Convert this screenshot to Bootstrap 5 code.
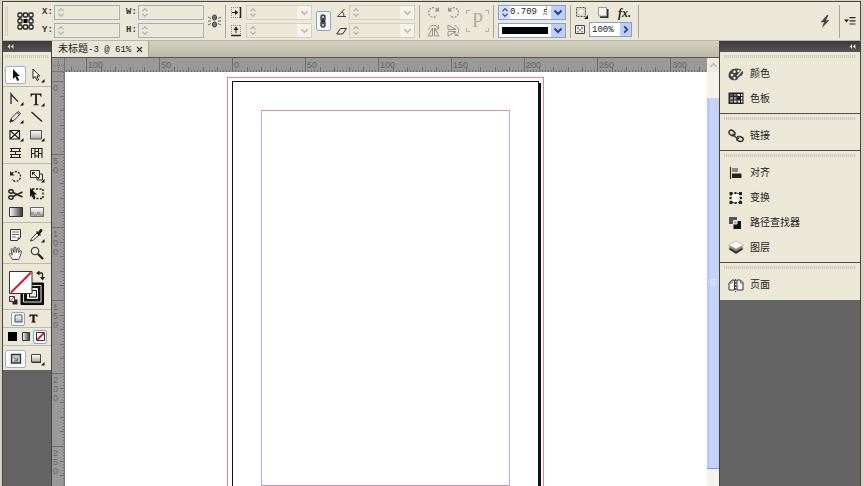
<!DOCTYPE html>
<html lang="zh-CN">
<head>
<meta charset="utf-8">
<meta name="viewport" content="width=device-width, initial-scale=1">
<title>未标题-3 @ 61%</title>
<link rel="stylesheet" href="https://cdn.jsdelivr.net/npm/bootstrap@5.3.0/dist/css/bootstrap.min.css">
<style>
:root{--face:#ebe8d8;--edge:#45443f;--line:#a9a698;--blue:#9fb0c4;--pasteboard:#646464}
body{background:#d6d3c4;font:10px/14px "Liberation Sans","Noto Sans CJK SC",sans-serif;color:#222;overflow:hidden}
.app{padding:1px 3px 0 2px}
button,input,select{font:inherit;color:inherit;padding:0;margin:0;border:0;background:none;border-radius:0;min-width:0}
svg{display:block;flex:none}
.latin{font:9px/14px "Liberation Mono","Noto Sans CJK SC",monospace}
/* control bar */
.control-bar{height:40px;background:var(--face);border:1px solid var(--edge);border-width:1px 1px 0;padding-left:2px;border-bottom:1px solid #bab7a8}
.grip-v{width:3px;height:30px;border:1px solid #d0cdbd;border-width:0 1px}
.pair{display:grid;grid-template-rows:15px 15px;row-gap:3px;align-items:center}
.pair-label{grid-template-columns:12px 66px}
.pair-next{padding-left:6px}
.tag{font:bold 9px/14px "Liberation Mono",monospace;color:#33322d}
.field{height:15px;border:1px solid var(--blue);display:flex;align-items:center}
.field input{flex:1;width:10px;height:13px}
.field .spin{width:11px;height:13px;display:grid;place-items:center;color:#b9b8b0}
.field .drop{width:14px;height:13px;display:grid;place-items:center;color:#c0beb2;background:#f4f2e9}
.w66{width:66px}.w68{width:68px}
.dim{border-color:#d2cfc0}
.live{background:#fff;border-color:#86a0d2}
.live .spin{color:#3e5b94;background:#d6e1fb}
.live .drop{color:#28457f;background:#bccffa}
.pct{width:43px;padding-left:2px}
.pct .drop{width:11px}
.stroke-kind{flex:1;height:13px;appearance:none;background:linear-gradient(#000,#000) 3px 3px/46px 7px no-repeat}
.rule-v{width:1px;height:33px;background:var(--line)}
.slot{display:grid;justify-items:center}
.slot20{width:20px}.slot21{width:21px}.slot22{width:22px}.slot15{width:15px}.slot34{width:34px}
.link-btn{width:15px;height:20px;border:1px solid #8ea6c6;border-radius:2px;background:#f2f6fb;display:grid;place-items:center}
.spins{display:grid;grid-template-columns:13px 13px;grid-template-rows:13px 13px;gap:5px 7px;padding:0 6px 0 7px;color:#96948a}
.pbox{width:23px;height:22px;color:#b0ada0;font:20px/20px "Liberation Serif",serif;background:
 linear-gradient(#b5b2a5,#b5b2a5) 0 0/4px 1px,linear-gradient(#b5b2a5,#b5b2a5) 0 0/1px 4px,
 linear-gradient(#b5b2a5,#b5b2a5) 100% 0/4px 1px,linear-gradient(#b5b2a5,#b5b2a5) 100% 0/1px 4px,
 linear-gradient(#b5b2a5,#b5b2a5) 0 100%/4px 1px,linear-gradient(#b5b2a5,#b5b2a5) 0 100%/1px 4px,
 linear-gradient(#b5b2a5,#b5b2a5) 100% 100%/4px 1px,linear-gradient(#b5b2a5,#b5b2a5) 100% 100%/1px 4px;background-repeat:no-repeat}
.effects{width:67px;padding-left:4px;row-gap:2px}
.fx{font:italic bold 12px/14px "Liberation Serif",serif}
.gap9{gap:9px}
/* docks */
.dock-head{height:11px;background:linear-gradient(#3a3a3a,#555);color:#ddd}
.toolbox{width:50px;background:var(--pasteboard);border:1px solid var(--edge);border-width:0 1px}
.tool-body{background:var(--face)}
.tool-grip{height:14px;padding:3px 2px}
.tool-grip div,.panel-grip{height:3px;background:repeating-linear-gradient(90deg,#cfccbd 0 1px,#e4e1d2 1px 2px)}
.tool-set{display:grid;grid-template-columns:21px 21px;padding:3px 2px 1px;border-bottom:1px solid #bcb9aa}
.tool-set.first{padding:0 2px 2px}
.tool-set.last{border:0;padding:4px 2px 2px}
.tool{height:18px;display:grid;place-items:center;border:1px solid transparent;border-radius:2px}
.tool.on{background:#fcfdfe;border-color:#9db2c8}
.proxy{padding:4px 4px 2px;border-bottom:1px solid #bcb9aa}
.mini-row{height:18px;border-bottom:1px solid #bcb9aa;padding:0 2px}
.mini-row.target{padding-left:8px;gap:1px}
.mini{width:14px;height:14px;display:grid;place-items:center;border:1px solid transparent;border-radius:2px}
.mini.on{border-color:#8ea6c6;background:#f4f7fb}
/* document */
.tabs{height:17px;background:linear-gradient(#d3d0c1,#bdb9a5);border-bottom:1px solid #55544e}
.doc-tab{background:#e9e6d8;padding:0 5px 0 6px;border-right:1px solid #a5a292;gap:5px}
.sheet{display:grid;grid-template-columns:13px minmax(0,1fr) 12px;grid-template-rows:14px minmax(0,1fr)}
.rule-bg{background:#999}
.scroll{grid-row:1/3;grid-column:3;background:#f4f3ec}
.arrow{height:14px;display:grid;place-items:center;color:#c3c1b8;background:#edebe2}
.track{height:26px}
.thumb{background:linear-gradient(90deg,#b4c5f4,#c6d6fd 40%,#c0d0fa);border-bottom:1px solid #7e98ca}
.tail{height:17px}
.pasteboard{background:#fff;overflow:hidden}
.bleed{width:317px;margin:5px 0 0 162px;border:1px solid #f07c8c;padding:3px 4px}
.paper{border:1px solid #111;box-shadow:2px 2px 0 #111;min-height:434px;padding:28px}
.margins{height:376px;border:1px solid;border-color:#d08fc0 #b4a8f4}
/* panels */
.panels{width:142px;background:var(--pasteboard);border:1px solid var(--edge);border-width:0 1px}
.panel-set{background:var(--face);padding:3px 0 2px;border-bottom:1px solid #4c4b46}
.panel-set:last-child{border:0;padding-bottom:3px}
.panel-grip{margin:0 4px 3px}
.panel-btn{height:25px;width:100%;padding-left:8px;gap:6px;text-align:left;color:#222}
</style>
<script src="https://cdn.jsdelivr.net/npm/bootstrap@5.3.0/dist/js/bootstrap.bundle.min.js"></script>
</head>
<body>
<svg width="0" height="0" class="position-absolute" aria-hidden="true">
 <defs>
  <linearGradient id="gr"><stop stop-color="#fff"/><stop offset="1" stop-color="#333"/></linearGradient>
  <linearGradient id="gv" x2="0" y2="1"><stop stop-color="#fff"/><stop offset="1" stop-color="#aaa"/></linearGradient>
  <symbol id="updown" viewBox="0 0 9 13"><path d="M1.500 5L4.500 2l3 3M1.500 8l3 3 3-3" fill="none" stroke="currentColor" stroke-width="1.600"/></symbol>
  <symbol id="chev" viewBox="0 0 10 10"><path d="M1.500 3.500L5 7l3.500-3.500" fill="none" stroke="currentColor" stroke-width="2"/></symbol>
  <symbol id="chain" viewBox="0 0 8 14"><g fill="#bbb" stroke="#444" stroke-width="1.500"><rect x="2" y="1" width="4" height="6" rx="2"/><rect x="2" y="7" width="4" height="6" rx="2"/><path d="M4 4v6" stroke="#222"/></g></symbol>
  <symbol id="rot" viewBox="0 0 13 13"><path d="M3 3.500A4.800 4.800 0 1 1 3 9.500" fill="none" stroke="currentColor" stroke-width="1.300" stroke-dasharray="2 1.200"/><path d="M1 1v4.500h4.500z" fill="currentColor"/></symbol>
  <symbol id="flip" viewBox="0 0 13 13"><path d="M1 12l4.500-8v8zM7.500 4l4.500 8H7.500z" fill="none" stroke="currentColor"/><path d="M1.500 5.500C3 0 10 0 11.500 5M11.500 1v4H8" fill="none" stroke="currentColor"/></symbol>
  <symbol id="collapse" viewBox="0 0 8 6"><path d="M3.500 0v6L.5 3zM7.500 0v6l-3-3z" fill="currentColor"/></symbol>
 </defs>
</svg>

<div class="app vh-100 d-flex flex-column">
 <header class="control-bar flex-shrink-0 d-flex align-items-center">
  <div class="grip-v"></div>
  <div class="slot slot34"><svg width="17" height="18" viewBox="0 0 17 18"><g fill="none" stroke="#222" stroke-width="1.300"><path d="M3 3h11v12H3z" stroke-width="1"/><g fill="#ebe8d8"><rect x="1" y="1" width="4" height="4" rx="1"/><rect x="6.500" y="1" width="4" height="4" rx="1"/><rect x="12" y="1" width="4" height="4" rx="1"/><rect x="1" y="7" width="4" height="4" rx="1"/><rect x="12" y="7" width="4" height="4" rx="1"/><rect x="1" y="13" width="4" height="4" rx="1"/><rect x="6.500" y="13" width="4" height="4" rx="1"/><rect x="12" y="13" width="4" height="4" rx="1"/></g></g><path d="M6.500 7h4v4h-4z" fill="#000"/></svg></div>
  <div class="pair pair-label">
   <label class="tag" for="fx-x">X:</label><div class="field"><button class="spin" aria-label="X"><svg width="8" height="11"><use href="#updown"/></svg></button><input id="fx-x"></div>
   <label class="tag" for="fx-y">Y:</label><div class="field"><button class="spin" aria-label="Y"><svg width="8" height="11"><use href="#updown"/></svg></button><input id="fx-y"></div>
  </div>
  <div class="pair pair-label pair-next">
   <label class="tag" for="fx-w">W:</label><div class="field"><button class="spin" aria-label="W"><svg width="8" height="11"><use href="#updown"/></svg></button><input id="fx-w"></div>
   <label class="tag" for="fx-h">H:</label><div class="field"><button class="spin" aria-label="H"><svg width="8" height="11"><use href="#updown"/></svg></button><input id="fx-h"></div>
  </div>
  <div class="slot slot21"><svg width="13" height="14" viewBox="0 0 13 14"><g fill="#777" stroke="#444"><rect x="4.500" y="1" width="4" height="5" rx="2"/><rect x="4.500" y="8" width="4" height="5" rx="2"/></g><path d="M0 3l3 1.500M0 7h3M0 11l3-1.500M13 3l-3 1.500M13 7h-3M13 11l-3-1.500" stroke="#666"/></svg></div>
  <div class="rule-v"></div>
  <div class="pair slot20">
   <svg class="mx-auto" width="12" height="13" viewBox="0 0 12 13"><path d="M1 1.500h9.500M1 11.500h9.500M1.500 1v11" stroke="#888" stroke-dasharray="1 1"/><path d="M10.500 1v11" stroke="#222" stroke-width="1.500"/><path d="M2 6.500h3" stroke="#222"/><path d="M5 4l3.500 2.500L5 9z" fill="#222"/></svg>
   <svg class="mx-auto" width="12" height="13" viewBox="0 0 12 13"><path d="M1.500 1v11M10.500 1v11M1 1.500h10" stroke="#888" stroke-dasharray="1 1"/><path d="M1 11.500h10" stroke="#222" stroke-width="1.500"/><path d="M6 5v4" stroke="#222"/><path d="M3.500 6L6 2.500 8.500 6z" fill="#222"/></svg>
  </div>
  <div class="pair w66">
   <div class="field dim"><button class="spin" aria-label="微调"><svg width="8" height="11"><use href="#updown"/></svg></button><input aria-label="X 缩放"><button class="drop" aria-label="展开"><svg width="9" height="9"><use href="#chev"/></svg></button></div>
   <div class="field dim"><button class="spin" aria-label="微调"><svg width="8" height="11"><use href="#updown"/></svg></button><input aria-label="Y 缩放"><button class="drop" aria-label="展开"><svg width="9" height="9"><use href="#chev"/></svg></button></div>
  </div>
  <div class="slot slot22"><button class="link-btn" aria-label="约束比例"><svg width="8" height="14"><use href="#chain"/></svg></button></div>
  <div class="pair slot15">
   <svg class="mx-auto" width="11" height="11" viewBox="0 0 11 11"><path d="M8.500 2L1.500 9.500H10M6 4.500Q8 6 8 9.500" fill="none" stroke="#444"/></svg>
   <svg class="mx-auto" width="11" height="11" viewBox="0 0 11 11"><path d="M4.500 3.500h6L6.500 9H.800z" fill="none" stroke="#333"/></svg>
  </div>
  <div class="pair w66">
   <div class="field dim"><button class="spin" aria-label="微调"><svg width="8" height="11"><use href="#updown"/></svg></button><input aria-label="旋转"><button class="drop" aria-label="展开"><svg width="9" height="9"><use href="#chev"/></svg></button></div>
   <div class="field dim"><button class="spin" aria-label="微调"><svg width="8" height="11"><use href="#updown"/></svg></button><input aria-label="切变"><button class="drop" aria-label="展开"><svg width="9" height="9"><use href="#chev"/></svg></button></div>
  </div>
  <div class="rule-v ms-1"></div>
  <div class="spins">
   <button aria-label="顺时针旋转"><svg width="13" height="13"><g transform="matrix(-1 0 0 1 13 0)"><use href="#rot" width="13" height="13"/></g></svg></button>
   <button aria-label="逆时针旋转"><svg width="13" height="13"><use href="#rot"/></svg></button>
   <button aria-label="水平翻转"><svg width="13" height="13"><use href="#flip"/></svg></button>
   <button aria-label="垂直翻转"><svg width="13" height="13"><g transform="rotate(90 6.500 6.500)"><use href="#flip" width="13" height="13"/></g></svg></button>
  </div>
  <div class="pbox text-center">P</div>
  <div class="rule-v ms-1 me-1"></div>
  <div class="pair w68">
   <div class="field live"><button class="spin" aria-label="微调"><svg width="8" height="11"><use href="#updown"/></svg></button><input class="latin" aria-label="描边粗细" value="0.709 点"><button class="drop ms-1" aria-label="展开"><svg width="10" height="10"><use href="#chev"/></svg></button></div>
   <div class="field live"><select class="stroke-kind" aria-label="描边类型"><option value="solid" label=" "></option></select><span class="drop"><svg width="10" height="10"><use href="#chev"/></svg></span></div>
  </div>
  <div class="rule-v ms-1"></div>
  <div class="pair effects">
   <div class="d-flex align-items-center gap9">
    <svg width="13" height="13" viewBox="0 0 13 13"><rect x="1.500" y="1.500" width="9" height="9" fill="#d8d6cc" stroke="#555" stroke-dasharray="2 1"/><circle cx="6" cy="6" r="2.500" fill="#eee"/><path d="M13 9v4H9z" fill="#222"/></svg>
    <svg width="12" height="13" viewBox="0 0 12 13"><path d="M3 3h8.500v9H3z" fill="#333"/><path d="M1.500 1.500h8v8.500h-8z" fill="#f5f4ee" stroke="#999"/></svg>
    <button class="fx" aria-label="效果">fx.</button>
   </div>
   <div class="d-flex align-items-center gap-1">
    <svg width="10" height="11" viewBox="0 0 10 11"><path d="M.5 1.500h9v8h-9z" fill="#eee" stroke="#444"/><path d="M2 3h2v2H2zM6 3h2v2H6zM4 5h2v2H4zM2 7h2v1.500H2zM6 7h2v1.500H6z" fill="#999"/></svg>
    <div class="field live pct"><input class="latin" aria-label="不透明度" value="100%"><button class="drop" aria-label="展开"><svg width="9" height="9"><g transform="rotate(-90 4.500 4.500)"><use href="#chev" width="9" height="9"/></g></svg></button></div>
   </div>
  </div>
  <div class="rule-v"></div>
  <button class="ms-auto me-1" aria-label="快速应用"><svg width="12" height="15" viewBox="0 0 12 15"><path d="M8 1L1.500 8.500l3.500-.5-2 6L10.500 6l-3.500.5L9.500 1z" fill="#444"/></svg></button>
  <div class="rule-v ms-1"></div>
  <button class="ms-1 me-1" aria-label="面板菜单"><svg width="12" height="10" viewBox="0 0 12 10"><path d="M0 3.500h5L2.500 6.500zM5.500 1h6v1.200h-6zM5.500 4.200h6v1.200h-6zM5.500 7.400h6v1.200h-6z" fill="#222"/></svg></button>
 </header>

 <div class="d-flex flex-grow-1 overflow-hidden">
  <aside class="toolbox flex-shrink-0">
   <div class="dock-head d-flex align-items-center ps-1"><svg width="7" height="5"><use href="#collapse"/></svg></div>
   <div class="tool-body">
    <div class="tool-grip"><div></div></div>
    <div class="tool-set first">
     <button class="tool on" aria-label="选择"><svg width="14" height="14" viewBox="0 0 14 14"><path d="M4 1v10l2.300-2.300L8.200 13l2-1-2-4H11z" fill="#111"/></svg></button>
     <button class="tool" aria-label="直接选择"><svg width="16" height="15" viewBox="0 0 16 15"><path d="M4 1v9.500l2.300-2L8 12.500l1.500-.7L8 8h2.700z" fill="#fff" stroke="#222"/><path d="M15.500 11v3.500H12z" fill="#111"/></svg></button>
    </div>
    <div class="tool-set">
     <button class="tool" aria-label="钢笔"><svg width="16" height="14" viewBox="0 0 16 14"><path d="M3 12V2l2 2.500 5 5" fill="none" stroke="#333" stroke-width="1.400"/><path d="M15.500 10v3.500H12z" fill="#111"/></svg></button>
     <button class="tool" aria-label="文字"><svg width="16" height="15" viewBox="0 0 16 15"><path d="M1.500 1.500h11v3.300h-.8q-.5-2-2-2H8v8.700q0 1 1.600 1v.7H4.500v-.7q1.600 0 1.600-1V2.800H4.300q-1.500 0-2 2h-.8z" fill="#222"/><path d="M15.500 11v3.500H12z" fill="#111"/></svg></button>
     <button class="tool" aria-label="铅笔"><svg width="16" height="14" viewBox="0 0 16 14"><path d="M2 12l1.500-4L10 1.500l2.500 2L6 10.500z" fill="#eee" stroke="#333"/><path d="M2 12l1-2.800 2 1.800zM9 2.500l2.500 2.200" fill="#222" stroke="#333"/><path d="M15.500 10v3.500H12z" fill="#111"/></svg></button>
     <button class="tool" aria-label="直线"><svg width="14" height="14" viewBox="0 0 14 14"><path d="M1.500 2l10.500 9.500" stroke="#222" stroke-width="1.400"/></svg></button>
     <button class="tool" aria-label="框架"><svg width="16" height="14" viewBox="0 0 16 14"><path d="M2 2.500h9.500v8.500H2zM2 2.500L11.500 11M11.500 2.500L2 11" fill="#f4f2ea" stroke="#222" stroke-width="1.200"/><path d="M15.500 10v3.500H12z" fill="#111"/></svg></button>
     <button class="tool" aria-label="矩形"><svg width="16" height="14" viewBox="0 0 16 14"><path d="M1.500 2.500h11v8.500h-11z" fill="url(#gv)" stroke="#555"/><path d="M15.500 10v3.500H12z" fill="#111"/></svg></button>
     <button class="tool" aria-label="水平网格"><svg width="13" height="12" viewBox="0 0 13 12"><path d="M1 1.500h11M1 4.500h11M1 7.500h11M1 10.500h11M2.500 1v3M10.500 1v3M6.500 4v4M2.500 7v4M10.500 7v4" stroke="#222" stroke-width="1.100"/></svg></button>
     <button class="tool" aria-label="垂直网格"><svg width="13" height="12" viewBox="0 0 13 12"><path d="M1 1.500h11.500M1.500 1v10M5 1v10M8.500 1v10M12 1v10M1 6.500h4M8 6.500h4M5 4.500h3.500M5 9h3.500" stroke="#222" stroke-width="1.100"/></svg></button>
    </div>
    <div class="tool-set">
     <button class="tool" aria-label="旋转"><svg width="13" height="13"><use href="#rot"/></svg></button>
     <button class="tool" aria-label="缩放"><svg width="16" height="14" viewBox="0 0 16 14"><path d="M1.500 1.500h9v7h-9z" fill="#eee" stroke="#333"/><path d="M3 3h3.500L3 6.500z" fill="#222"/><path d="M4 4l6 6M10.500 5h3v6H8V8.500" fill="none" stroke="#333"/><path d="M15.500 10v3.500H12z" fill="#111"/></svg></button>
     <button class="tool" aria-label="剪刀"><svg width="16" height="13" viewBox="0 0 16 13"><g fill="none" stroke="#222" stroke-width="1.400"><ellipse cx="3" cy="3.500" rx="2.200" ry="1.700"/><ellipse cx="3" cy="9.500" rx="2.200" ry="1.700"/><path d="M5 4.500L14.500 9M5 8.500L14.500 4"/></g></svg></button>
     <button class="tool" aria-label="自由变换"><svg width="16" height="14" viewBox="0 0 16 14"><path d="M3.500 2h10.500v9.500H3.500z" fill="none" stroke="#222" stroke-width="1.500" stroke-dasharray="2 1.500"/><path d="M1 1v9l2.200-2L5 11.500l1.500-.7L5 7.500h3z" fill="#111"/></svg></button>
     <button class="tool" aria-label="渐变"><svg width="14" height="12" viewBox="0 0 14 12"><path d="M.5 1.500h13v9H.5z" fill="url(#gr)" stroke="#333"/></svg></button>
     <button class="tool" aria-label="渐变羽化"><svg width="14" height="12" viewBox="0 0 14 12"><path d="M.5 1.500h13v9H.5z" fill="url(#gv)" stroke="#666"/><path d="M1 6h3v2h3V6h3v2h3v2h-3V9H7v1H4V9H1z" fill="#999"/></svg></button>
    </div>
    <div class="tool-set">
     <button class="tool" aria-label="附注"><svg width="13" height="14" viewBox="0 0 13 14"><path d="M1.500 1.500h10v8l-3 3h-7z" fill="#f5f4ee" stroke="#333"/><path d="M3 4h7M3 6.500h7M3 9h4" stroke="#777"/><path d="M11.500 9.500h-3v3z" fill="#555"/></svg></button>
     <button class="tool" aria-label="吸管"><svg width="16" height="15" viewBox="0 0 16 15"><path d="M1.500 13l1-2.500 5.500-5.500 2 2-5.500 5z" fill="#eee" stroke="#333"/><path d="M7 4l4 4 1-1-1-1 2.500-3Q13.500.5 11.500 1L9 4 8 3z" fill="#222"/><path d="M15.500 11v3.500H12z" fill="#111"/></svg></button>
     <button class="tool" aria-label="抓手"><svg width="15" height="15" viewBox="0 0 15 15"><path d="M4.500 13.500C3.500 11 1 9 1.500 7.500c1-.8 2 .5 3 1.500L3 3.500c0-1.200 1.400-1.300 1.800 0L6 6.500 6 2c0-1.300 1.700-1.300 1.900 0l.3 4.500L9.500 2.500c.5-1.100 1.900-.7 1.700.5l-.8 4L12 5c.8-.8 1.800 0 1.400 1-.9 3-1.400 5-2.900 7.500z" fill="#fff" stroke="#444"/></svg></button>
     <button class="tool" aria-label="缩放显示"><svg width="14" height="14" viewBox="0 0 14 14"><circle cx="5" cy="5" r="3.700" fill="#eee" stroke="#444" stroke-width="1.300"/><path d="M8 8l5 5" stroke="#222" stroke-width="2.300"/></svg></button>
    </div>
    <div class="proxy"><svg width="40" height="39" viewBox="0 0 40 39">
     <path d="M14 15h22.500v21.500H14z" fill="#111" stroke="#000"/><path d="M16.500 17.500h17.500v16.500H16.500z" fill="none" stroke="#ddd"/><path d="M20.500 20.500h10v10h-10z" fill="#ebe8d8" stroke="#eee"/><path d="M22.500 22.500h7v6.500h-7z" fill="none" stroke="#111"/>
     <path d="M2.500 3.500h22.500v22H2.500z" fill="#fff" stroke="#333"/><path d="M4 24.500L24 4.500" stroke="#d01c28" stroke-width="2"/>
     <path d="M31 5h3.500q1 0 1 1v4" fill="none" stroke="#222" stroke-width="1.300"/><path d="M29 5l3.500-2.500v5zM35.500 12.500L33 9h5z" fill="#222"/>
     <path d="M5.500 31.500h5v5h-5z" fill="#222"/><path d="M2.500 28.500h5v5h-5z" fill="#fff" stroke="#333"/><path d="M3 33.500l4.500-5" stroke="#d01c28"/></svg></div>
    <div class="mini-row target d-flex align-items-center">
     <button class="mini on" aria-label="格式针对容器"><svg width="9" height="9"><path d="M1 1h7v7H1z" fill="url(#gv)" stroke="#555"/></svg></button>
     <button class="mini" aria-label="格式针对文本"><svg width="9" height="9" viewBox="0 0 9 9"><path d="M.5.500h8V3h-.8L7 1.800H5.600v5.400L6.800 8v.5H2.200V8l1.200-.8V1.800H2L1.300 3H.5z" fill="#111"/></svg></button>
    </div>
    <div class="mini-row d-flex align-items-center">
     <button class="mini" aria-label="应用颜色"><svg width="9" height="9"><path d="M0 0h9v9H0z" fill="#000"/></svg></button>
     <button class="mini" aria-label="应用渐变"><svg width="8" height="9"><path d="M.5.500h7v8h-7z" fill="url(#gr)" stroke="#333"/></svg></button>
     <button class="mini on" aria-label="应用无"><svg width="9" height="9"><path d="M.5.500h8v8h-8z" fill="#fff" stroke="#333"/><path d="M1 8l7-7" stroke="#d01c28" stroke-width="1.800"/></svg></button>
    </div>
    <div class="tool-set last">
     <button class="tool on" aria-label="正常视图"><svg width="12" height="12" viewBox="0 0 12 12"><path d="M1.500 1.500h9v8.500h-9z" fill="#ccc" stroke="#333" stroke-width="1.300"/><path d="M3.500 4l4 4M7.500 4.500v3.500H4" fill="none" stroke="#666"/></svg></button>
     <button class="tool" aria-label="预览"><svg width="16" height="14" viewBox="0 0 16 14"><path d="M2.500 2.500h9v7.500h-9z" fill="url(#gv)" stroke="#444"/><path d="M2.500 10.500H12" stroke="#333"/><path d="M15.500 10v3.500H12z" fill="#111"/></svg></button>
    </div>
   </div>
  </aside>

  <main class="flex-grow-1 d-flex flex-column overflow-hidden">
   <div class="tabs d-flex flex-shrink-0">
    <div class="doc-tab d-flex align-items-center"><span>未标题<span class="latin">-3 @ 61%</span></span><button aria-label="关闭"><svg width="7" height="7" viewBox="0 0 7 7"><path d="M1 1l5 5M6 1L1 6" stroke="#333" stroke-width="1.200"/></svg></button></div>
   </div>
   <div class="sheet flex-grow-1 overflow-hidden">
    <svg class="rule-bg" width="13" height="14"><path d="M6.500 1v12M1 7.500h11" stroke="#777" stroke-dasharray="1 1"/><path d="M0 13.500h13M12.500 0v14" stroke="#777"/></svg>
    <svg class="rule-bg w-100" height="14" font-family="Liberation Sans, sans-serif" font-size="9" fill="#666">
     <defs><pattern id="ticks-h" x="21" width="73" height="14" patternUnits="userSpaceOnUse"><path d="M.5 0v14M15.500 9v5M29.500 9v5M44.500 9v5M58.500 9v5M3.500 12v2M6.500 12v2M9.500 12v2M12.500 12v2M18.500 12v2M21.500 12v2M24.500 12v2M27.500 12v2M32.500 12v2M35.500 12v2M38.500 12v2M41.500 12v2M47.500 12v2M50.500 12v2M53.500 12v2M56.500 12v2M61.500 12v2M64.500 12v2M67.500 12v2M70.500 12v2" stroke="#6d6d6d"/></pattern></defs>
     <rect width="100%" height="14" fill="url(#ticks-h)"/>
     <text x="23" y="10">100</text><text x="96" y="10">50</text><text x="169" y="10">0</text><text x="242" y="10">50</text><text x="315" y="10">100</text><text x="388" y="10">150</text><text x="461" y="10">200</text><text x="534" y="10">250</text><text x="607" y="10">300</text>
    </svg>
    <div class="scroll d-flex flex-column">
     <button class="arrow" aria-label="向上滚动"><svg width="9" height="9"><g transform="rotate(180 4.500 4.500)"><use href="#chev" width="9" height="9"/></g></svg></button>
     <div class="track"></div>
     <div class="thumb flex-grow-1 d-grid align-items-center justify-content-center"><svg width="6" height="8"><path d="M0 .5h6M0 2.500h6M0 4.500h6M0 6.500h6" stroke="#dde6ff"/></svg></div>
     <div class="tail"></div>
    </div>
    <svg class="rule-bg h-100" width="13" font-family="Liberation Sans, sans-serif" font-size="9" fill="#6a6a6a">
     <defs><pattern id="ticks-v" y="9" width="13" height="73" patternUnits="userSpaceOnUse"><path d="M0 .5h13M8 15.500h5M8 29.500h5M8 44.500h5M8 58.500h5M11 3.500h2M11 6.500h2M11 9.500h2M11 12.500h2M11 18.500h2M11 21.500h2M11 24.500h2M11 27.500h2M11 32.500h2M11 35.500h2M11 38.500h2M11 41.500h2M11 47.500h2M11 50.500h2M11 53.500h2M11 56.500h2M11 61.500h2M11 64.500h2M11 67.500h2M11 70.500h2" stroke="#6d6d6d"/></pattern></defs>
     <rect width="13" height="100%" fill="url(#ticks-v)"/><path d="M12.500 0v2000" stroke="#777"/>
     <text x="1" y="19">0</text>
     <text y="92"><tspan x="1">5</tspan><tspan x="1" dy="9">0</tspan></text>
     <text y="165"><tspan x="1">1</tspan><tspan x="1" dy="9">0</tspan><tspan x="1" dy="9">0</tspan></text>
     <text y="238"><tspan x="1">1</tspan><tspan x="1" dy="9">5</tspan><tspan x="1" dy="9">0</tspan></text>
     <text y="311"><tspan x="1">2</tspan><tspan x="1" dy="9">0</tspan><tspan x="1" dy="9">0</tspan></text>
     <text y="384"><tspan x="1">2</tspan><tspan x="1" dy="9">5</tspan><tspan x="1" dy="9">0</tspan></text>
    </svg>
    <div class="pasteboard"><div class="bleed"><div class="paper"><div class="margins"></div></div></div></div>
   </div>
  </main>

  <aside class="panels flex-shrink-0">
   <div class="dock-head d-flex align-items-center justify-content-end pe-1"><svg width="7" height="5"><use href="#collapse"/></svg></div>
   <div class="panel-set"><div class="panel-grip"></div>
    <button class="panel-btn d-flex align-items-center"><svg width="16" height="14" viewBox="0 0 16 14"><path d="M8 1.500C3.500 1.500.5 5 .5 8.500c0 3 2.500 4.800 6 4.800 3.500 0 3-2 4.500-3.300C12.500 9 15 8.500 15 5.500 15 3 12 1.500 8 1.500z" fill="#444"/><g fill="#f3f1e8"><circle cx="4" cy="8" r="1.300"/><circle cx="6.500" cy="4.800" r="1.300"/><circle cx="10.500" cy="4" r="1.200"/><circle cx="6.500" cy="11" r="1.200"/></g><path d="M8.500 9L14 2l1 1-5 6.500z" fill="#ddd"/></svg>颜色</button>
    <button class="panel-btn d-flex align-items-center"><svg width="16" height="13" viewBox="0 0 16 13"><path d="M.5.500h15v11.500H.5z" fill="#222"/><path d="M2 2h3v2H2z" fill="#555"/><path d="M6 2h2.500v2H6z" fill="#777"/><path d="M9.500 2H12v2H9.500zM13 2h1.500v2H13zM13 5h1.500v2.500H13zM13 8.500h1.500v2H13zM9.500 8.500H12v2H9.500zM6 8.500h2.500v2H6z" fill="#ddd"/><path d="M2 5h3v2.500H2zM6 5h2.500v2.500H6zM2 8.500h3v2H2z" fill="#999"/></svg>色板</button>
   </div>
   <div class="panel-set"><div class="panel-grip"></div>
    <button class="panel-btn d-flex align-items-center"><svg width="16" height="14" viewBox="0 0 16 14"><g fill="none" stroke="#333" stroke-width="1.500"><ellipse cx="4" cy="4" rx="3.200" ry="2.400" transform="rotate(35 4 4)"/><ellipse cx="12" cy="10" rx="3.200" ry="2.400" transform="rotate(15 12 10)"/><path d="M4.500 4.500Q7 9 11 9.500"/></g></svg>链接</button>
   </div>
   <div class="panel-set"><div class="panel-grip"></div>
    <button class="panel-btn d-flex align-items-center"><svg width="16" height="14" viewBox="0 0 16 14"><path d="M2.500 1v12" stroke="#333" stroke-width="1.200"/><path d="M4 2h6v4H4z" fill="#888"/><path d="M4 7.500h9.500v4.500H4z" fill="#222"/></svg>对齐</button>
    <button class="panel-btn d-flex align-items-center"><svg width="16" height="14" viewBox="0 0 16 14"><path d="M3 2.500h9v9H3z" fill="#fff" stroke="#444" stroke-dasharray="2 1"/><path d="M1.500 1h3v3h-3zM6.500 1h2v2h-2zM11 1h3v3h-3zM1.500 10h3v3h-3zM6.500 11h2v2h-2zM11 10h3v3h-3zM1.500 6h2v2h-2zM12 6h2v2h-2z" fill="#222"/></svg>变换</button>
    <button class="panel-btn d-flex align-items-center"><svg width="16" height="14" viewBox="0 0 16 14"><path d="M1 1h8v7H1z" fill="#555"/><path d="M5.500 5H13v8H5.500z" fill="#111"/><path d="M5.500 4.500h3.500V8H5.500z" fill="#aaa" stroke="#eee"/></svg>路径查找器</button>
    <button class="panel-btn d-flex align-items-center"><svg width="16" height="15" viewBox="0 0 16 15"><path d="M8 4.500l7.500 4.500L8 14 .5 9z" fill="#333"/><path d="M8 3l7.500 4L8 11.500.5 7z" fill="#888"/><path d="M8 1l7.500 4L8 9 .5 5z" fill="#fafafa" stroke="#999" stroke-width=".5"/></svg>图层</button>
   </div>
   <div class="panel-set"><div class="panel-grip"></div>
    <button class="panel-btn d-flex align-items-center"><svg width="16" height="14" viewBox="0 0 16 14"><path d="M1 5l3-3h2.500v10H1zM9 2h3.500L15 4.500V12H9z" fill="#f8f7f2" stroke="#333"/><path d="M7.700 1v13" stroke="#333" stroke-dasharray="2 1"/><path d="M4 2v3H1M12.500 2v3H15" fill="none" stroke="#666"/></svg>页面</button>
   </div>
  </aside>
 </div>
</div>
</body>
</html>
